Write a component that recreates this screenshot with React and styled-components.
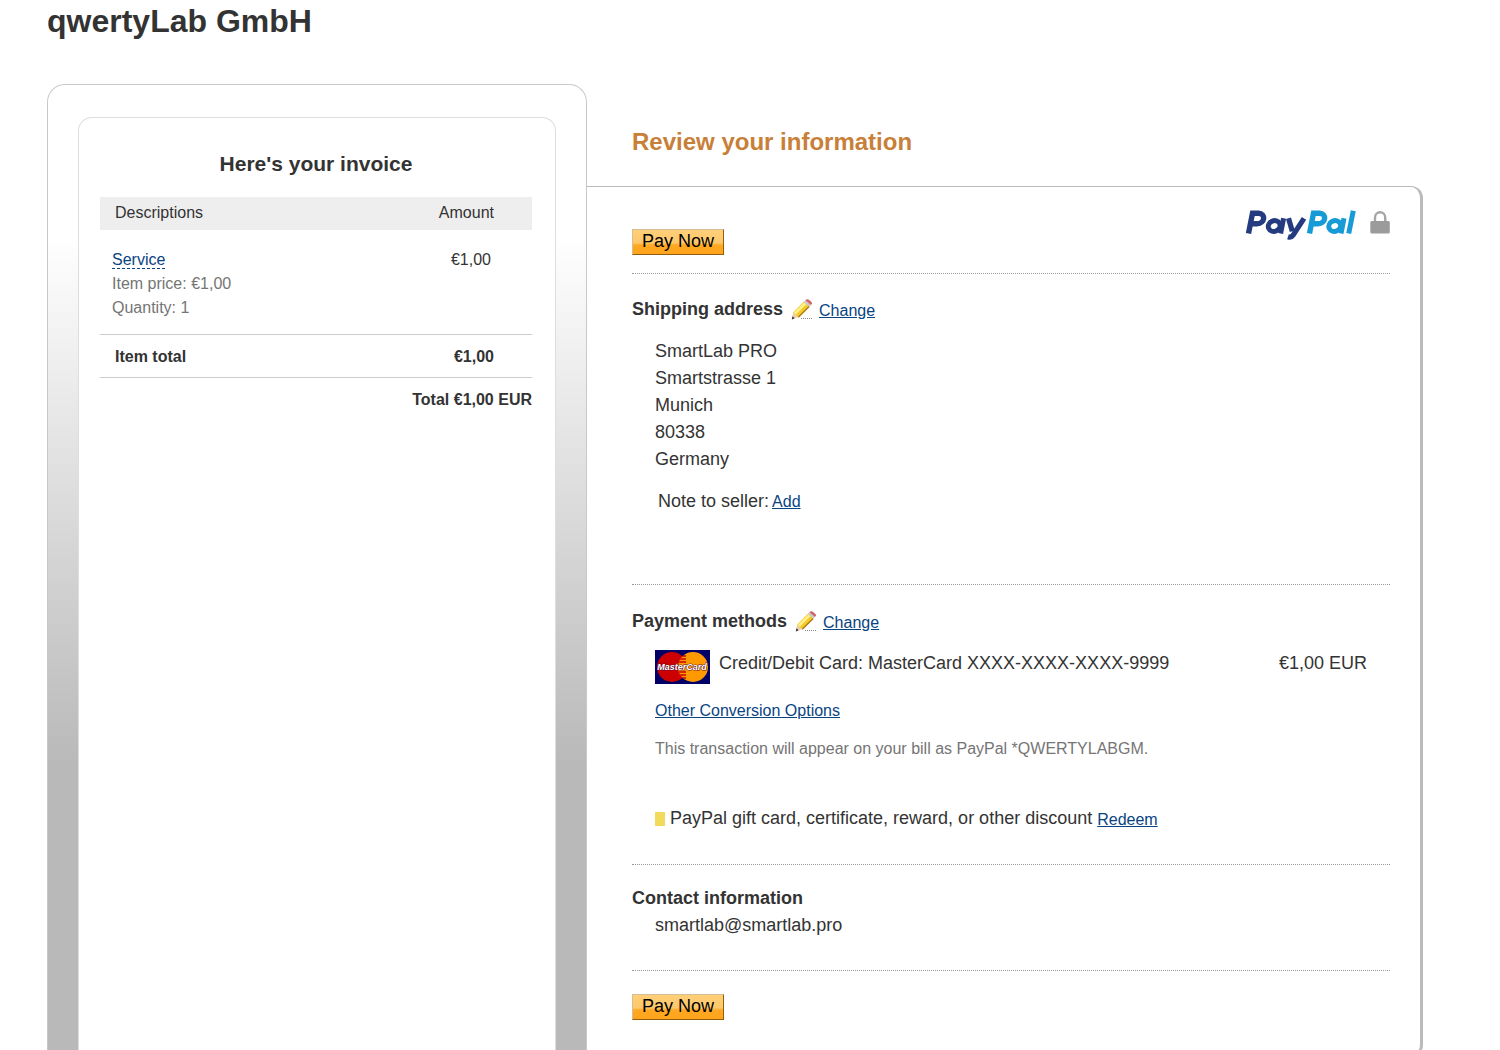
import { useId } from "react";
import styled, { createGlobalStyle } from "styled-components";

const GlobalStyle = createGlobalStyle`
  * {
    box-sizing: border-box;
  }
  body {
    margin: 0;
    background: #fff;
    color: #333;
    font-family: "Liberation Sans", Arial, sans-serif;
    font-size: 18px;
    line-height: 27px;
  }
  h1, h2, h3, p, address {
    margin: 0;
    font-style: normal;
  }
`;

const Page = styled.div`
  display: flex;
  flex-direction: column;
  height: 100vh;
  overflow: hidden;
  padding: 0 77px 0 47px;
`;

const MerchantName = styled.h1`
  flex: none;
  height: 84px;
  padding-top: 1px;
  font-size: 32px;
  line-height: 40px;
`;

const Columns = styled.main`
  flex: 1 0 auto;
  display: grid;
  grid-template-columns: minmax(0, 540fr) minmax(0, 836fr);
`;

const InvoicePanel = styled.section`
  display: flex;
  padding: 32px 30px 0;
  border: 1px solid #c8c8c8;
  border-bottom: 0;
  border-radius: 18px 18px 0 0;
  background: linear-gradient(#fff 150px, #b9b9b9 680px);
`;

const InvoiceCard = styled.div`
  flex: 1;
  padding: 32px 23px 0 21px;
  border: 1px solid #ddd;
  border-bottom: 0;
  border-radius: 14px 14px 0 0;
  background: #fff;
`;

const InvoiceTitle = styled.h2`
  margin-bottom: 20px;
  font-size: 21px;
  line-height: 27px;
  text-align: center;
`;

const InvoiceTable = styled.table`
  width: 100%;
  border-collapse: collapse;
  font-size: 16px;
  line-height: 24px;

  th,
  td {
    padding: 0 15px;
    text-align: left;
    vertical-align: top;
  }
  th:last-child,
  td:last-child {
    padding-right: 38px;
    text-align: right;
  }
`;

const HeadRow = styled.tr`
  background: #eee;

  th {
    height: 33px;
    padding-top: 4px;
    font-weight: normal;
  }
`;

const ItemRow = styled.tr`
  && td {
    padding: 18px 12px 14px;
  }
  && td:last-child {
    padding-right: 41px;
  }
`;

const SubtotalRow = styled.tr`
  border-top: 1px solid #ccc;
  border-bottom: 1px solid #ccc;
  font-weight: bold;

  td {
    height: 43px;
    padding-top: 10px;
  }
`;

const TotalRow = styled.tr`
  font-weight: bold;

  && td {
    padding: 10px 0 0;
    text-align: right;
  }
`;

const ItemDetail = styled.div`
  color: #757575;
`;

const ServiceLink = styled.a`
  border-bottom: 1px dashed #084482;
  color: #084482;
  text-decoration: none;
`;

const ReviewColumn = styled.section`
  display: flex;
  flex-direction: column;
`;

const ReviewTitle = styled.h2`
  height: 102px;
  padding: 42px 0 0 45px;
  color: #c88039;
  font-size: 24px;
  line-height: 32px;
`;

const ReviewPanel = styled.div`
  position: relative;
  padding: 42px 30px 34px 45px;
  border-top: 1px solid #bbb;
  border-right: 3px solid #bbb;
  border-bottom: 3px solid #bbb;
  border-radius: 0 12px 12px 0;
`;

const Brand = styled.div`
  position: absolute;
  top: 20px;
  right: 30px;
`;

const Section = styled.section`
  min-height: ${(props) => props.$height}px;
  padding-top: ${(props) => props.$top || 22}px;
  border-top: 1px dotted #999;
`;

const PayButton = styled.button`
  display: block;
  width: 92px;
  height: 26px;
  padding: 0 0 2px;
  border: 1px solid;
  border-color: #d5bd98 #935e0d #935e0d #d5bd98;
  background: linear-gradient(#ffcf79 0, #ffc86a 13px, #ffa822 15px, #ffa41c);
  color: #000;
  font: 18px/22px "Liberation Sans", Arial, sans-serif;
  cursor: pointer;
`;

const TopAction = styled.div`
  padding-bottom: 18px;
`;

const SectionHead = styled.div`
  display: flex;
  align-items: center;
  margin-bottom: ${(props) => props.$gap}px;

  svg {
    margin: 0 6px 0 8px;
  }
`;

const SectionTitle = styled.h3`
  font-size: 18px;
  line-height: 27px;
`;

const TextLink = styled.a`
  color: #084482;
  font-size: 16px;
  line-height: 24px;
  text-underline-offset: 1px;
`;

const ChangeLink = styled(TextLink)`
  padding-top: 2px;
`;

const Indent = styled.div`
  padding-left: 23px;
`;

const Note = styled.p`
  display: flex;
  gap: 3px;
  padding: 15px 0 0 3px;
`;

const CardRow = styled.div`
  display: flex;
  align-items: flex-start;
  height: 47px;
  padding-right: 23px;

  svg {
    margin: 0 9px 0 0;
  }
`;

const CardAmount = styled.span`
  margin-left: auto;
`;

const Statement = styled.p`
  margin: 13px 0 44px;
  color: #757575;
  font-size: 16px;
  line-height: 24px;
`;

const GiftRow = styled.p`
  display: flex;
  align-items: center;
`;

const Swatch = styled.span`
  width: 10px;
  height: 14px;
  margin-right: 5px;
  background: #f2db5c;
`;

const RedeemLink = styled(TextLink)`
  margin-left: 5px;
  padding-top: 2px;
`;

function PayPalLogo() {
  return (
    <svg width="146" height="34" viewBox="0 0 146 34" role="img" aria-label="PayPal">
      <g fill="none" stroke="#253b80">
        <path d="M4.500 26.500 8.500 6.300H14.500c7.600 0 6.600 10.400-1.500 10.400H7.500" strokeWidth="5.400" />
        <ellipse cx="30.200" cy="19" rx="6" ry="5.300" transform="rotate(-25 30.200 19)" strokeWidth="5" />
        <path d="M39.600 11.300 36.600 26.600" strokeWidth="5" />
        <path d="m44.500 11.300 3.800 13M60 11.300 49 28.300q-1.800 2.600-5 1.500" strokeWidth="5.200" />
      </g>
      <g fill="none" stroke="#179bd7">
        <path d="M65.500 26.500 69.500 6.300H75.500c7.600 0 6.600 10.400-1.500 10.400H68.500" strokeWidth="5.400" />
        <ellipse cx="90.700" cy="19" rx="6" ry="5.300" transform="rotate(-25 90.700 19)" strokeWidth="5" />
        <path d="M100 11.300 97 26.600M109.300 3.700l-4.600 22.900" strokeWidth="5" />
      </g>
      <path d="M131 15v-4.500a5 5.200 0 0 1 10.200 0V15" fill="none" stroke="#a5a5a5" strokeWidth="2.400" />
      <rect x="126.300" y="14" width="19.500" height="12.500" rx="1.500" fill="#9b9b9b" />
    </svg>
  );
}

function PencilIcon() {
  return (
    <svg width="22" height="22" viewBox="0 0 22 22" aria-hidden="true">
      <path d="M10 19.500h11" stroke="#8a8a8a" strokeDasharray="1 1" />
      <path d="m.8 20.500 1.400-7L7.500 18z" fill="#e8cfa6" />
      <path d="M2.200 13.500 12.800 2.800l5.600 4.800L7.500 18.200z" fill="#f5c928" />
      <path d="m3 13.700 10.600-10.600 2 1.800L5 15.500z" fill="#fff08a" />
      <path d="M7.300 18.200 18.200 7.500" stroke="#a77416" strokeWidth="1.200" />
      <path d="m12.600 3 1.800-1.700 5.600 4.800-1.600 1.700z" fill="#c9c9c9" />
      <path d="M14.400 1.300 15.200.6q1-.8 2.300 0l2.900 2.300q1 1 .4 2.200l-.9 1z" fill="#cf6464" />
      <path d="m.8 20.500.7-3.200 2.100 1.900z" fill="#333" />
    </svg>
  );
}

function MasterCardLogo() {
  const clip = useId();
  return (
    <svg width="55" height="34" viewBox="0 0 55 34" role="img" aria-label="MasterCard">
      <clipPath id={clip}>
        <circle cx="38" cy="17" r="15" />
      </clipPath>
      <rect width="55" height="34" fill="#000066" />
      <circle cx="17" cy="17" r="15" fill="#cc0000" />
      <circle cx="38" cy="17" r="15" fill="#ff9900" />
      <path
        d="M24 6h7M24 9h7M24 12h7M24 22h7M24 25h7M24 28h7"
        stroke="#cc0000"
        strokeWidth="1.500"
        clipPath={`url(#${clip})`}
      />
      <text
        x="27"
        y="20"
        textAnchor="middle"
        fill="#fff"
        stroke="#5c1530"
        strokeWidth="1"
        paintOrder="stroke"
        fontFamily="Liberation Sans, Arial, sans-serif"
        fontSize="9"
        fontWeight="bold"
        fontStyle="italic"
      >
        MasterCard
      </text>
    </svg>
  );
}

function Invoice() {
  return (
    <InvoicePanel>
      <InvoiceCard>
        <InvoiceTitle>Here's your invoice</InvoiceTitle>
        <InvoiceTable>
          <thead>
            <HeadRow>
              <th scope="col">Descriptions</th>
              <th scope="col">Amount</th>
            </HeadRow>
          </thead>
          <tbody>
            <ItemRow>
              <td>
                <ServiceLink href="#service">Service</ServiceLink>
                <ItemDetail>Item price: €1,00</ItemDetail>
                <ItemDetail>Quantity: 1</ItemDetail>
              </td>
              <td>€1,00</td>
            </ItemRow>
            <SubtotalRow>
              <td>Item total</td>
              <td>€1,00</td>
            </SubtotalRow>
            <TotalRow>
              <td colSpan={2}>Total €1,00 EUR</td>
            </TotalRow>
          </tbody>
        </InvoiceTable>
      </InvoiceCard>
    </InvoicePanel>
  );
}

function Review() {
  return (
    <ReviewColumn>
      <ReviewTitle>Review your information</ReviewTitle>
      <ReviewPanel>
        <Brand>
          <PayPalLogo />
        </Brand>
        <TopAction>
          <PayButton type="button">Pay Now</PayButton>
        </TopAction>
        <Section $height={311}>
          <SectionHead $gap={15}>
            <SectionTitle>Shipping address</SectionTitle>
            <PencilIcon />
            <ChangeLink href="#shipping">Change</ChangeLink>
          </SectionHead>
          <Indent>
            <address>
              SmartLab PRO
              <br />
              Smartstrasse 1
              <br />
              Munich
              <br />
              80338
              <br />
              Germany
            </address>
            <Note>
              Note to seller:
              <ChangeLink href="#note">Add</ChangeLink>
            </Note>
          </Indent>
        </Section>
        <Section $height={280} $top={23}>
          <SectionHead $gap={15}>
            <SectionTitle>Payment methods</SectionTitle>
            <PencilIcon />
            <ChangeLink href="#payment">Change</ChangeLink>
          </SectionHead>
          <Indent>
            <CardRow>
              <MasterCardLogo />
              <span>Credit/Debit Card: MasterCard XXXX-XXXX-XXXX-9999</span>
              <CardAmount>€1,00 EUR</CardAmount>
            </CardRow>
            <TextLink href="#conversion">Other Conversion Options</TextLink>
            <Statement>
              This transaction will appear on your bill as PayPal *QWERTYLABGM.
            </Statement>
            <GiftRow>
              <Swatch />
              PayPal gift card, certificate, reward, or other discount
              <RedeemLink href="#redeem">Redeem</RedeemLink>
            </GiftRow>
          </Indent>
        </Section>
        <Section $height={106} $top={20}>
          <SectionTitle>Contact information</SectionTitle>
          <Indent>smartlab@smartlab.pro</Indent>
        </Section>
        <Section $height={49} $top={23}>
          <PayButton type="button">Pay Now</PayButton>
        </Section>
      </ReviewPanel>
    </ReviewColumn>
  );
}

export default function App() {
  return (
    <>
      <GlobalStyle />
      <Page>
        <MerchantName>qwertyLab GmbH</MerchantName>
        <Columns>
          <Invoice />
          <Review />
        </Columns>
      </Page>
    </>
  );
}
